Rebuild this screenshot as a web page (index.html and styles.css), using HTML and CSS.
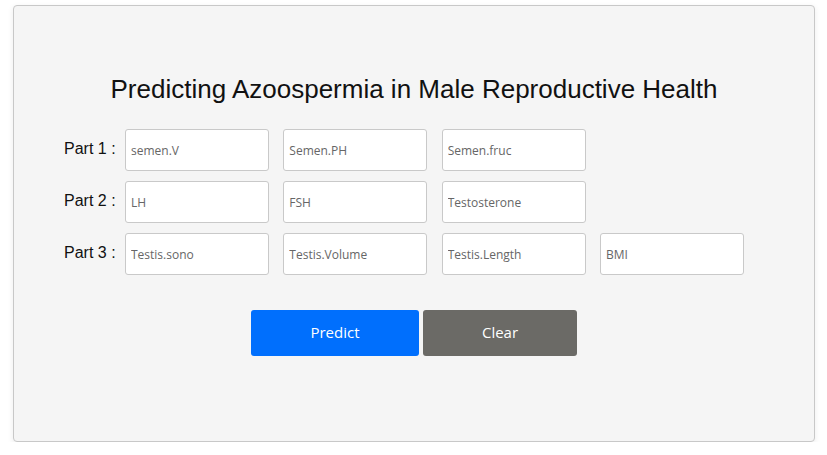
FILE: index.html
```html
<!DOCTYPE html>
<html>
<head>
<meta charset="utf-8">
<link rel="stylesheet" href="styles.css">
</head>
<body>
<div class="card">
  <h1 class="title">Predicting Azoospermia in Male Reproductive Health</h1>
  <form class="form">
    <div class="row">
      <label class="label">Part 1 :</label>
      <input class="field" placeholder="semen.V">
      <input class="field" placeholder="Semen.PH">
      <input class="field" placeholder="Semen.fruc">
    </div>
    <div class="row">
      <label class="label">Part 2 :</label>
      <input class="field" placeholder="LH">
      <input class="field" placeholder="FSH">
      <input class="field" placeholder="Testosterone">
    </div>
    <div class="row">
      <label class="label">Part 3 :</label>
      <input class="field" placeholder="Testis.sono">
      <input class="field" placeholder="Testis.Volume">
      <input class="field" placeholder="Testis.Length">
      <input class="field" placeholder="BMI">
    </div>
    <div class="actions">
      <button type="button" class="btn btn-predict">Predict</button>
      <button type="button" class="btn btn-clear">Clear</button>
    </div>
  </form>
</div>
</body>
</html>
```

FILE: styles.css
```css
html, body {
  margin: 0;
  padding: 0;
  background: #ffffff;
}
body {
  padding: 5px 12px 0 13px;
  font-family: "Liberation Sans", Arial, sans-serif;
}
.card {
  box-sizing: border-box;
  width: 802px;
  height: 437px;
  background: #f5f5f5;
  border: 1px solid #c8c8c8;
  border-radius: 4px;
  box-shadow: 0 2px 6px rgba(0,0,0,0.08);
  padding-top: 66px;
}
.title {
  margin: 0;
  text-align: center;
  font-family: "Liberation Sans", Arial, sans-serif;
  font-weight: normal;
  font-size: 26px;
  line-height: 34px;
  color: #111;
}
.form {
  margin-top: 23px;
  padding-left: 50px;
  display: flex;
  flex-direction: column;
  gap: 10px;
}
.row {
  display: flex;
  align-items: center;
  gap: 14.33px;
}
.label {
  width: 52px;
  margin-right: -5.33px;
  font-size: 16px;
  color: #111;
  white-space: nowrap;
  margin-top: -2px;
}
.field {
  box-sizing: border-box;
  width: 144px;
  height: 42px;
  background: #fff;
  border: 1px solid #c9c9c9;
  border-radius: 3px;
  padding: 0 5px;
  font-family: "Open Sans", "Noto Sans", sans-serif;
  font-size: 12px;
  color: #333;
  outline: none;
}
.field::placeholder {
  color: #666;
}
.actions {
  margin-top: 25px;
  margin-left: -50px;
  display: flex;
  justify-content: center;
  gap: 4px;
}
.btn {
  height: 46px;
  border: none;
  border-radius: 3px;
  color: #fff;
  font-family: "Open Sans", "Noto Sans", sans-serif;
  font-size: 15px;
  padding: 0 0 3px;
  cursor: pointer;
}
.btn-predict {
  width: 168px;
  background: #006ffd;
}
.btn-clear {
  width: 154px;
  background: #6b6a66;
}
```
